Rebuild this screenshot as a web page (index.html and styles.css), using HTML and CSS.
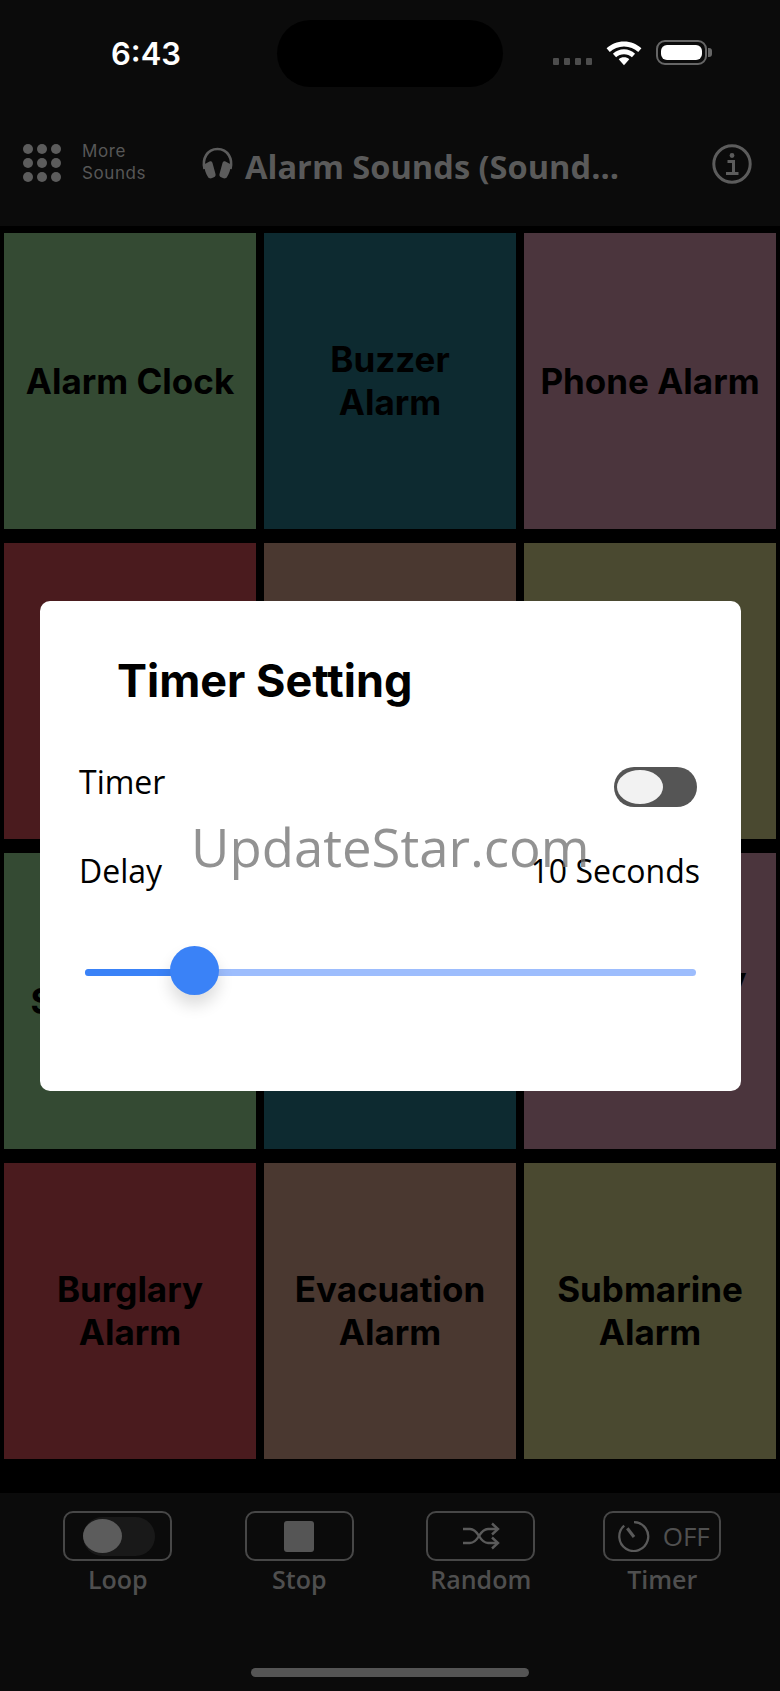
FILE: index.html
```html
<!DOCTYPE html>
<html lang="en">
<head>
  <meta charset="UTF-8">
  <meta name="viewport" content="width=device-width, initial-scale=1.0">
  <title>Alarm Sounds</title>
  <link rel="stylesheet" href="styles.css">
</head>
<body>
  <div class="screen">
    <!-- Status bar -->
    <div class="status">
      <span class="time">6:43</span>
      <div class="island"></div>
      <div class="signal"><i></i><i></i><i></i><i></i></div>
      <svg class="wifi" width="38" height="28" viewBox="0 0 36 26">
        <path d="M18 3C11.500 3 6 5.500 1.500 9.500L4.500 13C8 9.700 12.800 7.700 18 7.700S28 9.700 31.500 13L34.500 9.500C30 5.500 24.500 3 18 3Z" fill="#fff"/>
        <path d="M18 10.500C14 10.500 10.500 12 7.500 14.600L10.500 18C12.500 16.200 15.100 15.200 18 15.200S23.500 16.200 25.500 18L28.500 14.600C25.500 12 22 10.500 18 10.500Z" fill="#fff"/>
        <path d="M18 18C16 18 14.500 18.600 13 19.800L18 25.500L23 19.800C21.500 18.600 20 18 18 18Z" fill="#fff"/>
      </svg>
      <div class="battery"><div class="battery-fill"></div></div>
      <div class="battery-cap"></div>
    </div>

    <!-- Top bar -->
    <div class="topbar">
      <div class="dots">
        <i></i><i></i><i></i><i></i><i></i><i></i><i></i><i></i><i></i>
      </div>
      <div class="more">More<br>Sounds</div>
      <svg class="phones" width="33" height="32" viewBox="0 0 33 32">
        <path d="M3.500 22C1 12 6 2 16.500 2S32 12 29.500 22" fill="none" stroke="#5c5c5c" stroke-width="2.600"/>
        <path d="M3 17.500L8.500 14.500C10 14 11 14.500 11.500 16L14.500 27C14.900 28.500 14.300 29.700 12.900 30.300L10.500 31.300C9 31.700 7.800 31.300 7 30C5 27 3.300 22.500 3 17.500Z" fill="#5c5c5c"/>
        <path d="M30 17.500L24.500 14.500C23 14 22 14.500 21.500 16L18.500 27C18.100 28.500 18.700 29.700 20.100 30.300L22.500 31.300C24 31.700 25.200 31.300 26 30C28 27 29.700 22.500 30 17.500Z" fill="#5c5c5c"/>
      </svg>
      <div class="title">Alarm Sounds (Sound...</div>
      <svg class="info" width="40" height="40" viewBox="0 0 40 40">
        <circle cx="20" cy="20" r="18.200" fill="none" stroke="#5c5c5c" stroke-width="3"/>
        <circle cx="20" cy="11.500" r="2.400" fill="#5c5c5c"/>
        <path d="M15.500 17.500H21.500V28.500M14 29.500H26.500" fill="none" stroke="#5c5c5c" stroke-width="3"/>
      </svg>
    </div>

    <!-- Sound tiles -->
    <div class="grid">
      <div class="tile green">Alarm Clock</div>
      <div class="tile teal">Buzzer<br>Alarm</div>
      <div class="tile mauve">Phone Alarm</div>
      <div class="tile red"></div>
      <div class="tile brown"></div>
      <div class="tile olive"></div>
      <div class="tile green">Siren Alarm</div>
      <div class="tile teal"></div>
      <div class="tile mauve">Emergency<br>Alarm</div>
      <div class="tile red">Burglary<br>Alarm</div>
      <div class="tile brown">Evacuation<br>Alarm</div>
      <div class="tile olive">Submarine<br>Alarm</div>
    </div>

    <!-- Bottom controls -->
    <div class="controls">
      <div class="control">
        <div class="btn btn-loop"><div class="loop-track"><div class="loop-knob"></div></div></div>
        <span>Loop</span>
      </div>
      <div class="control">
        <div class="btn"><div class="stop"></div></div>
        <span>Stop</span>
      </div>
      <div class="control">
        <div class="btn">
          <svg width="38" height="28" viewBox="0 0 38 28" fill="none" stroke="#5a5a5a" stroke-width="2.400">
            <path d="M1 7H8C12 7 14 9 17 14S22 21 26 21H35"/>
            <path d="M1 21H8C12 21 14 19 17 14S22 7 26 7H35"/>
            <path d="M30 1.500L36 7L30 12.500M30 15.500L36 21L30 26.500"/>
          </svg>
        </div>
        <span>Random</span>
      </div>
      <div class="control">
        <div class="btn btn-timer">
          <svg width="32" height="32" viewBox="0 0 31 31" fill="none" stroke="#5a5a5a" stroke-width="2.200">
            <path d="M15.500 2A14 14 0 1 1 6 5.500"/>
            <path d="M9 8L15.500 16.500" stroke-width="3"/>
          </svg>
          <em>OFF</em>
        </div>
        <span>Timer</span>
      </div>
    </div>
    <div class="home-bar"></div>

    <!-- Timer dialog -->
    <div class="modal">
      <h2>Timer Setting</h2>
      <div class="row row-timer">
        <span>Timer</span>
        <div class="toggle"><div class="toggle-knob"></div></div>
      </div>
      <div class="row row-delay">
        <span>Delay</span>
        <span>10 Seconds</span>
      </div>
      <div class="slider">
        <div class="slider-fill"></div>
        <div class="slider-thumb"></div>
      </div>
    </div>

    <div class="watermark">UpdateStar.com</div>
  </div>
</body>
</html>
```

FILE: styles.css
```css
* {
  box-sizing: border-box;
}

body {
  margin: 0;
  background: #0b0b0b;
}

.screen {
  position: relative;
  width: 780px;
  height: 1691px;
  overflow: hidden;
  background: #0b0b0b;
  font-family: 'Open Sans', sans-serif;
  display: flex;
  flex-direction: column;
}

/* Status bar */
.status {
  height: 107px;
  padding-top: 20px;
  display: flex;
  align-items: flex-start;
  flex-shrink: 0;
}

.time {
  margin: 15px 0 0 111px;
  width: 166px;
  font-family: 'Inter', sans-serif;
  font-size: 31px;
  font-weight: 600;
  line-height: 38px;
  color: #fff;
}

.island {
  width: 226px;
  height: 67px;
  border-radius: 34px;
  background: #000;
}

.signal {
  margin: 38px 0 0 50px;
  display: flex;
  gap: 5px;
}

.signal i {
  width: 6px;
  height: 7px;
  border-radius: 1px;
  background: #4d4d4d;
}

.wifi {
  margin: 18px 0 0 13px;
}

.battery {
  margin: 20px 0 0 13px;
  width: 51px;
  height: 25px;
  padding: 3px;
  border: 2px solid #666;
  border-radius: 9px;
}

.battery-fill {
  height: 100%;
  border-radius: 6px;
  background: #fff;
}

.battery-cap {
  margin: 28px 0 0 1px;
  width: 4px;
  height: 9px;
  border-radius: 0 3px 3px 0;
  background: #666;
}

/* Top bar */
.topbar {
  height: 119px;
  display: flex;
  align-items: flex-start;
  flex-shrink: 0;
}

.dots {
  margin: 37px 0 0 23px;
  width: 38px;
  display: grid;
  grid-template-columns: repeat(3, 10px);
  gap: 4px;
}

.dots i {
  height: 10px;
  border-radius: 50%;
  background: #5c5c5c;
}

.more {
  margin: 33px 0 0 21px;
  width: 119px;
  font-family: 'Inter', sans-serif;
  font-size: 17px;
  line-height: 22px;
  letter-spacing: 0.6px;
  color: #575757;
}

.phones {
  margin-top: 40px;
}

.title {
  margin: 38px 0 0 11px;
  width: 467px;
  font-size: 32.6px;
  font-weight: 700;
  line-height: 44px;
  white-space: nowrap;
  color: #5a5a5a;
}

.info {
  margin-top: 37px;
}

/* Sound tiles */
.grid {
  height: 1267px;
  padding: 7px 4px 0;
  background: #000;
  display: grid;
  grid-template-columns: repeat(3, 252px);
  grid-auto-rows: 296px;
  column-gap: 8px;
  row-gap: 14px;
  flex-shrink: 0;
}

.tile {
  display: flex;
  align-items: center;
  justify-content: center;
  text-align: center;
  font-family: 'Inter', sans-serif;
  font-size: 35px;
  font-weight: 700;
  line-height: 43px;
  color: #000;
}

.green { background: #344a33; }
.teal { background: #0d2a30; }
.mauve { background: #4b353d; }
.red { background: #4a1b1e; }
.brown { background: #4a3830; }
.olive { background: #4a4930; }

/* Bottom controls */
.controls {
  padding: 18px 0 0 27px;
  display: grid;
  grid-template-columns: repeat(4, 181.5px);
  flex-shrink: 0;
}

.control {
  display: flex;
  flex-direction: column;
  align-items: center;
  font-size: 25px;
  font-weight: 600;
  line-height: 34px;
  color: #4f4f4f;
}

.btn {
  width: 109px;
  height: 50px;
  margin-bottom: 1px;
  border: 2px solid #474747;
  border-radius: 10px;
  display: flex;
  align-items: center;
  justify-content: center;
}

.btn-timer {
  width: 118px;
  gap: 13px;
  padding-left: 3px;
}

.btn-timer em {
  font-style: normal;
  font-size: 26px;
  font-weight: 400;
  line-height: 30px;
  color: #505050;
}

.btn-loop {
  justify-content: flex-start;
  padding-left: 18px;
}

.loop-track {
  width: 72px;
  height: 39px;
  border-radius: 20px;
  background: #191919;
  display: flex;
  align-items: center;
}

.loop-knob {
  width: 39px;
  height: 34px;
  border-radius: 50%;
  background: #5c5c5c;
}

.stop {
  width: 30px;
  height: 31px;
  border-radius: 3px;
  background: #555;
}

.home-bar {
  width: 278px;
  height: 9px;
  margin: 72px 0 0 251px;
  border-radius: 5px;
  background: #555;
  flex-shrink: 0;
}

/* Timer dialog */
.modal {
  position: absolute;
  left: 40px;
  top: 601px;
  width: 701px;
  height: 490px;
  padding: 52px 40px 0 39px;
  border-radius: 10px;
  background: #fff;
  color: #000;
}

.modal h2 {
  margin: 0 0 0 38px;
  font-family: 'Inter', sans-serif;
  font-size: 45px;
  font-weight: 700;
  line-height: 56px;
}

.row {
  display: flex;
  justify-content: space-between;
  align-items: flex-start;
  font-size: 32px;
  line-height: 44px;
}

.row-timer {
  margin-top: 51px;
  padding-right: 4px;
}

.row-delay {
  margin-top: 42px;
  padding-right: 1px;
}

.toggle {
  width: 83px;
  height: 40px;
  padding: 3px;
  margin-top: 7px;
  border-radius: 20px;
  background: #555;
}

.toggle-knob {
  width: 46px;
  height: 34px;
  border-radius: 50%;
  background: #f2f2f2;
}

.slider {
  position: relative;
  margin: 76px 5px 0 6px;
  height: 7px;
  border-radius: 4px;
  background: #9dbdfd;
}

.slider-fill {
  width: 100px;
  height: 100%;
  border-radius: 4px;
  background: #3a82f7;
}

.slider-thumb {
  position: absolute;
  left: 85px;
  top: -23px;
  width: 49px;
  height: 49px;
  border-radius: 50%;
  background: #3a82f7;
  box-shadow: 0 10px 16px rgba(0, 0, 0, 0.14);
}

.watermark {
  position: absolute;
  left: 191px;
  top: 809px;
  font-size: 52.7px;
  line-height: 76px;
  color: rgba(110, 110, 110, 0.75);
  white-space: nowrap;
}
```
